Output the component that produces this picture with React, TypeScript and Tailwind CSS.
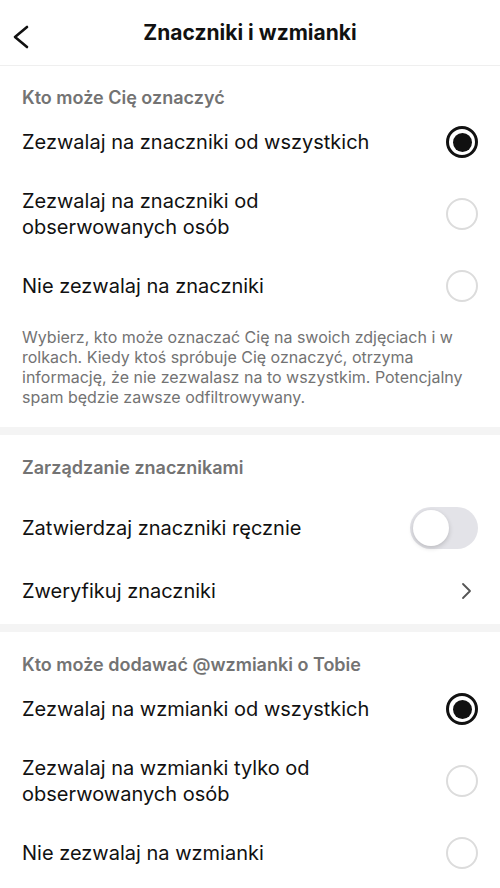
const font = { fontFamily: "Inter, 'Noto Sans', sans-serif" };

function Radio({ checked }: { checked?: boolean }) {
  if (checked) {
    return (
      <span className="flex size-[32px] shrink-0 items-center justify-center rounded-full border-[3px] border-[#111]">
        <span className="size-[19px] rounded-full bg-[#111]" />
      </span>
    );
  }
  return <span className="size-[32px] shrink-0 rounded-full border-2 border-[#dcdcdc]" />;
}

function SectionTitle({ children, top, bottom }: { children: string; top: string; bottom: string }) {
  return (
    <div className={`px-[22px] ${top} ${bottom} text-[18px] font-semibold leading-[22px] text-[#737373]`}>
      {children}
    </div>
  );
}

function RadioRow({ label, checked, tall }: { label: string; checked?: boolean; tall?: boolean }) {
  return (
    <div className={`flex items-center justify-between px-[22px] ${tall ? "h-[88px]" : "h-[56px]"}`}>
      <span className="max-w-[400px] pr-4 text-[20px] leading-[26px] text-[#111]">{label}</span>
      <Radio checked={checked} />
    </div>
  );
}

function Gap() {
  return <div className="h-[8px] bg-[#f4f4f4]" />;
}

export default function App() {
  return (
    <div className="h-[888px] w-[500px] overflow-hidden bg-white" style={font}>
      <header className="relative flex h-[66px] items-center justify-center border-b border-[#efefef]">
        <svg className="absolute left-[11px] top-[25px]" width="20" height="24" viewBox="0 0 20 24" fill="none">
          <path d="M16 2 L4 12 L16 22" stroke="#111" strokeWidth="2.6" strokeLinecap="round" strokeLinejoin="round" />
        </svg>
        <h1 className="text-[21px] font-bold text-[#111]">Znaczniki i wzmianki</h1>
      </header>

      <SectionTitle top="pt-[21px]" bottom="pb-[5px]">Kto może Cię oznaczyć</SectionTitle>
      <RadioRow label="Zezwalaj na znaczniki od wszystkich" checked />
      <RadioRow label="Zezwalaj na znaczniki od obserwowanych osób" tall />
      <RadioRow label="Nie zezwalaj na znaczniki" />
      <p className="px-[22px] pt-[13px] pb-[20px] text-[16px] leading-[20px] text-[#737373]">
        Wybierz, kto może oznaczać Cię na swoich zdjęciach i w rolkach. Kiedy ktoś spróbuje Cię oznaczyć, otrzyma
        informację, że nie zezwalasz na to wszystkim. Potencjalny spam będzie zawsze odfiltrowywany.
      </p>
      <Gap />

      <SectionTitle top="pt-[22px]" bottom="pb-[19px]">Zarządzanie znacznikami</SectionTitle>
      <div className="flex h-[60px] items-center justify-between px-[22px]">
        <span className="text-[20px] leading-[26px] text-[#111]">Zatwierdzaj znaczniki ręcznie</span>
        <span className="flex h-[42px] w-[68px] items-center rounded-full bg-[#e3e3e8] p-[3px]">
          <span className="size-[36px] rounded-full bg-white shadow-[0_2px_5px_rgba(0,0,0,0.18)]" />
        </span>
      </div>
      <div className="flex h-[66px] items-center justify-between px-[22px]">
        <span className="text-[20px] leading-[26px] text-[#111]">Zweryfikuj znaczniki</span>
        <svg width="12" height="18" viewBox="0 0 12 18" fill="none" className="mr-[6px]">
          <path d="M3 2 L10 9 L3 16" stroke="#555" strokeWidth="1.8" strokeLinecap="round" strokeLinejoin="round" />
        </svg>
      </div>
      <Gap />

      <SectionTitle top="pt-[22px]" bottom="pb-[5px]">Kto może dodawać @wzmianki o Tobie</SectionTitle>
      <RadioRow label="Zezwalaj na wzmianki od wszystkich" checked />
      <RadioRow label="Zezwalaj na wzmianki tylko od obserwowanych osób" tall />
      <RadioRow label="Nie zezwalaj na wzmianki" />
    </div>
  );
}
